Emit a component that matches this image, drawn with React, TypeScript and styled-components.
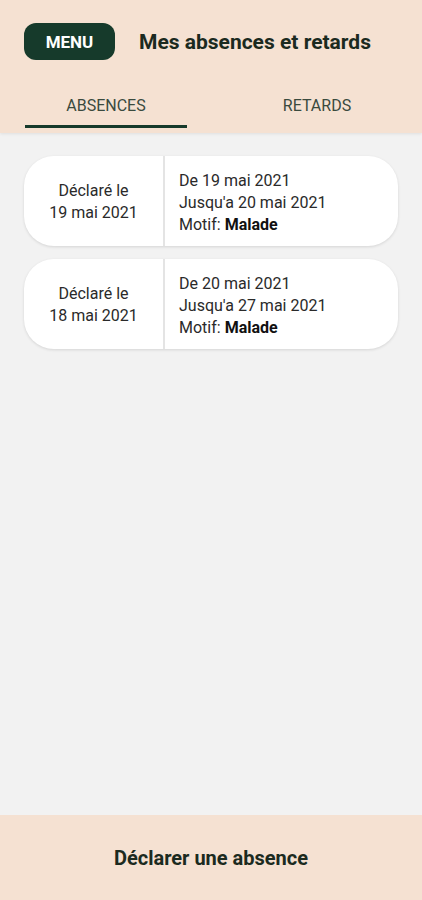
import React, { useState } from 'react';
import styled, { createGlobalStyle } from 'styled-components';

const GlobalStyle = createGlobalStyle`
  html, body { margin: 0; padding: 0; }
  body {
    font-family: Roboto, "Liberation Sans", sans-serif;
    background: #f2f2f2;
  }
`;

const Page = styled.div`
  display: flex;
  flex-direction: column;
  width: 422px;
  height: 900px;
  background: #f2f2f2;
`;

const Header = styled.header`
  background: #f5e1d2;
  display: flex;
  flex-direction: column;
  box-shadow: 0 1px 3px rgba(0, 0, 0, 0.08);
`;

const TopBar = styled.div`
  display: flex;
  align-items: center;
  gap: 24px;
  padding: 23px 24px 0;
  height: 37px;
`;

const MenuButton = styled.button`
  width: 91px;
  height: 37px;
  border: none;
  border-radius: 12px;
  background: #163a2b;
  color: #fff;
  font-family: Roboto, "Liberation Sans", sans-serif;
  font-weight: 700;
  font-size: 17px;
  cursor: pointer;
`;

const Title = styled.h1`
  margin: 0;
  font-size: 21px;
  font-weight: 700;
  color: #1b2a20;
`;

const Tabs = styled.div`
  display: flex;
  justify-content: space-between;
  padding: 0 24px 0 25px;
  margin-top: 36px;
`;

const Tab = styled.div<{ active?: boolean }>`
  width: 162px;
  display: flex;
  justify-content: center;
  padding-bottom: 10px;
  font-size: 16px;
  line-height: 19px;
  color: #3a4a3e;
  border-bottom: 3px solid ${p => (p.active ? '#163a2b' : 'transparent')};
  margin-bottom: 5px;
  cursor: pointer;
`;

const List = styled.main`
  flex: 1;
  display: flex;
  flex-direction: column;
  gap: 13px;
  padding: 23px 24px;
`;

const Card = styled.div`
  display: flex;
  height: 90px;
  background: #fff;
  border-radius: 30px;
  box-shadow: 0 1px 3px rgba(0, 0, 0, 0.12);
  overflow: hidden;
`;

const DeclaredCol = styled.div`
  width: 139px;
  border-right: 2px solid #e4e4e4;
  display: flex;
  align-items: center;
  justify-content: center;
  text-align: center;
  padding-top: 2px;
  font-size: 16px;
  line-height: 22px;
  color: #2a2a2a;
`;

const DetailCol = styled.div`
  flex: 1;
  display: flex;
  flex-direction: column;
  justify-content: center;
  padding: 3px 0 0 14px;
  font-size: 16px;
  line-height: 22px;
  color: #2a2a2a;
  b { color: #111; }
`;

const Footer = styled.footer`
  height: 85px;
  background: #f5e1d2;
  display: flex;
  align-items: center;
  justify-content: center;
  font-size: 20px;
  font-weight: 700;
  color: #1b2a20;
`;

const absences = [
  { declared: '19 mai 2021', from: '19 mai 2021', to: '20 mai 2021', reason: 'Malade' },
  { declared: '18 mai 2021', from: '20 mai 2021', to: '27 mai 2021', reason: 'Malade' },
];

export default function App() {
  const [tab, setTab] = useState(0);

  return (
    <Page>
      <GlobalStyle />
      <Header>
        <TopBar>
          <MenuButton>MENU</MenuButton>
          <Title>Mes absences et retards</Title>
        </TopBar>
        <Tabs>
          <Tab active={tab === 0} onClick={() => setTab(0)}>ABSENCES</Tab>
          <Tab active={tab === 1} onClick={() => setTab(1)}>RETARDS</Tab>
        </Tabs>
      </Header>
      <List>
        {absences.map((a, i) => (
          <Card key={i}>
            <DeclaredCol>Déclaré le<br />{a.declared}</DeclaredCol>
            <DetailCol>
              <span>De {a.from}</span>
              <span>Jusqu'a {a.to}</span>
              <span>Motif: <b>{a.reason}</b></span>
            </DetailCol>
          </Card>
        ))}
      </List>
      <Footer>Déclarer une absence</Footer>
    </Page>
  );
}
